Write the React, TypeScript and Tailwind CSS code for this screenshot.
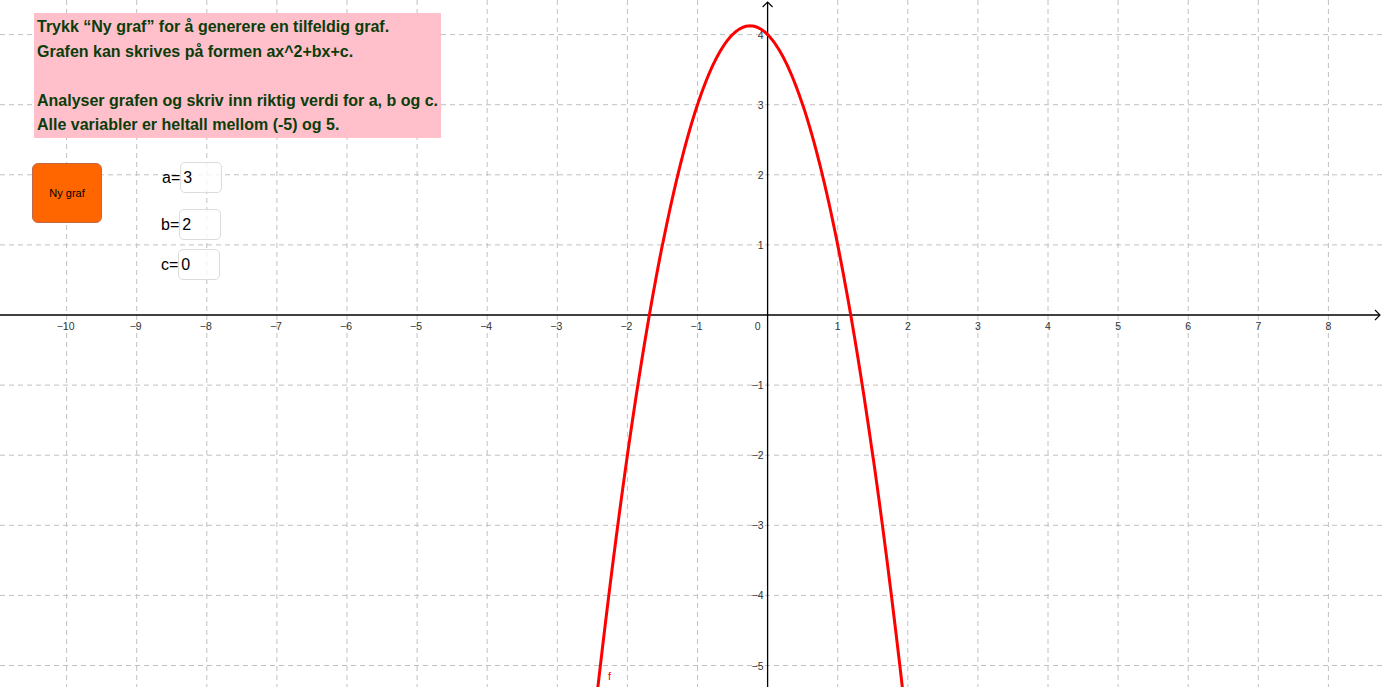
const W = 1382;
const H = 687;
const OX = 767.6;
const OY = 315;
const U = 70.1;

const px = (x: number) => OX + x * U;
const py = (y: number) => OY - y * U;

const f = (x: number) => -2 * x * x - x + 4;

const curvePoints = () => {
  const pts: string[] = [];
  for (let x = -2.5; x <= 2.0; x += 0.01) {
    pts.push(`${px(x).toFixed(1)},${py(f(x)).toFixed(1)}`);
  }
  return pts.join(' ');
};

const xTicks = [-10, -9, -8, -7, -6, -5, -4, -3, -2, -1, 1, 2, 3, 4, 5, 6, 7, 8];
const yTicks = [4, 3, 2, 1, -1, -2, -3, -4, -5];

const fmt = (n: number) => (n < 0 ? `\u2212${-n}` : `${n}`);

function Graph() {
  return (
    <svg width={W} height={H} className="block" style={{fontFamily: '"Liberation Sans", Arial, sans-serif'}}>
      {/* grid */}
      {[-10, -9, -8, -7, -6, -5, -4, -3, -2, -1, 1, 2, 3, 4, 5, 6, 7, 8].map((i) => (
        <line key={`v${i}`} x1={px(i)} x2={px(i)} y1={0} y2={H} stroke="#c0c0c0" strokeDasharray="5 4"/>
      ))}
      {[4, 3, 2, 1, -1, -2, -3, -4, -5].map((j) => (
        <line key={`h${j}`} x1={0} x2={W} y1={py(j)} y2={py(j)} stroke="#c0c0c0" strokeDasharray="5 4"/>
      ))}

      {/* axes */}
      <line x1={0} x2={W - 2} y1={OY} y2={OY} stroke="#000" strokeWidth={1.3}/>
      <polyline points={`${W - 7},${OY - 5} ${W - 2},${OY} ${W - 7},${OY + 5}`} fill="none" stroke="#000" strokeWidth={1.1}/>
      <line x1={OX} x2={OX} y1={2} y2={H} stroke="#000" strokeWidth={1.3}/>
      <polyline points={`${OX - 5},${7} ${OX},${2} ${OX + 5},${7}`} fill="none" stroke="#000" strokeWidth={1.1}/>

      {/* labels */}
      <g fill="#333" fontSize={10.5}>
        {xTicks.map((i) => (
          <text key={`xl${i}`} x={px(i) + (i < 0 ? -1 : 0)} y={OY + 15} textAnchor="middle">{fmt(i)}</text>
        ))}
        <text x={OX - 10} y={OY + 15} textAnchor="middle">0</text>
        {yTicks.map((j) => (
          <text key={`yl${j}`} x={OX - 4} y={py(j) + 4} textAnchor="end">{fmt(j)}</text>
        ))}
      </g>

      {/* curve */}
      <polyline points={curvePoints()} fill="none" stroke="#ff0000" strokeWidth={3} strokeLinejoin="round"/>
      <text x={608} y={680} fill="#ff0000" fontSize={11}>f</text>
    </svg>
  );
}

function Field({label, value, className}: {label: string; value: string; className?: string}) {
  return (
    <div className={`flex items-center ${className ?? ''}`}>
      <span className="text-[16px] text-black">{label}</span>
      <div className="w-[42px] h-[31px] rounded-[5px] border-[1.5px] border-[#dcdcdc] bg-white/80 flex items-center pl-[2px] text-[16px] text-black">
        {value}
      </div>
    </div>
  );
}

export default function App() {
  return (
    <div className="relative w-[1382px] h-[687px] bg-white overflow-hidden" style={{fontFamily: '"Liberation Sans", Arial, sans-serif'}}>
      <Graph/>
      <div className="absolute inset-0 flex flex-col items-start">
        <div className="ml-[34px] mt-[13px] w-[407px] h-[125px] bg-[#ffc0cb] pl-[3px] pt-[2px] font-bold text-[16px] leading-[24.5px] text-[#0a3d0a]">
          <p>Trykk “Ny graf” for å generere en tilfeldig graf.</p>
          <p>Grafen kan skrives på formen ax^2+bx+c.</p>
          <p>&nbsp;</p>
          <p>Analyser grafen og skriv inn riktig verdi for a, b og c.</p>
          <p>Alle variabler er heltall mellom (-5) og 5.</p>
        </div>
        <div className="flex items-start mt-[24px]">
          <button className="ml-[32px] mt-[1px] w-[70px] h-[60px] rounded-[6px] bg-[#ff6600] border border-[#c0684a] text-[11px] text-black">
            Ny graf
          </button>
          <div className="ml-[58px] flex flex-col">
            <Field label="a=" value="3" className="ml-[2px]"/>
            <Field label="b=" value="2" className="mt-[16px] ml-[1px]"/>
            <Field label="c=" value="0" className="mt-[9px] ml-[1px]"/>
          </div>
        </div>
      </div>
    </div>
  );
}
